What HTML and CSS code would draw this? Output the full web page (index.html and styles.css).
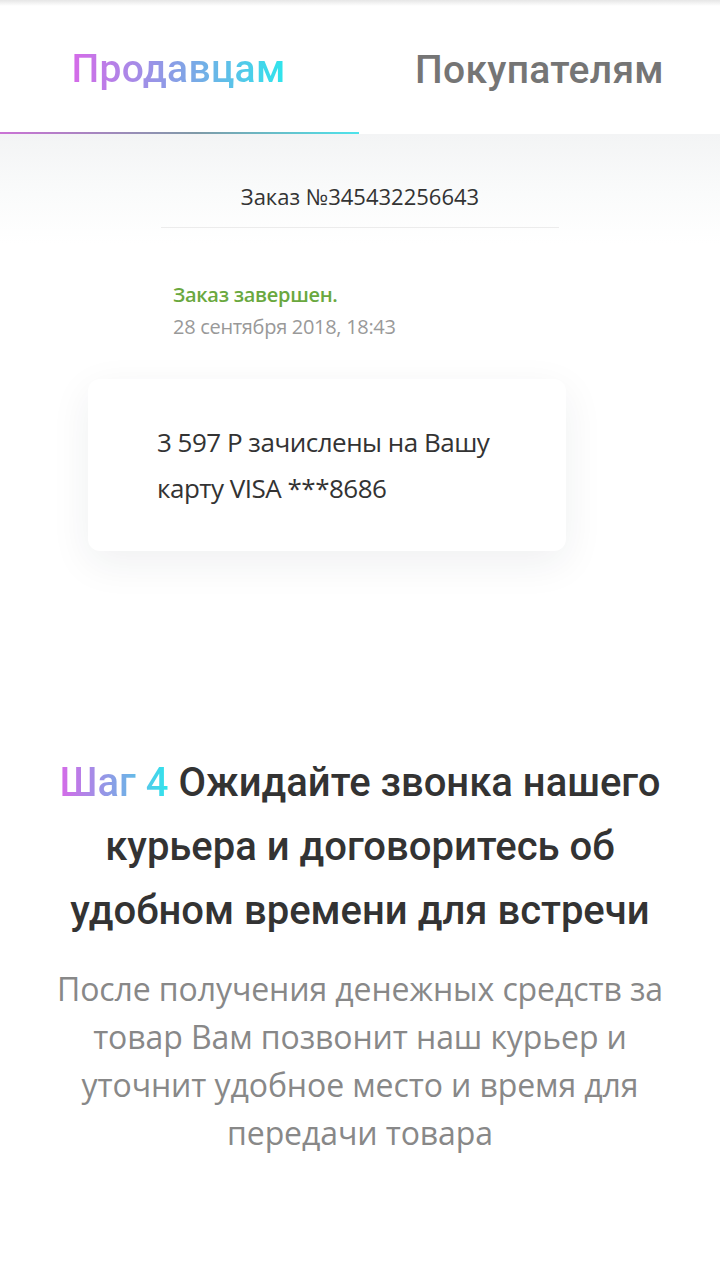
FILE: index.html
```html
<!DOCTYPE html>
<html lang="ru">
<head>
<meta charset="utf-8">
<link rel="stylesheet" href="styles.css">
</head>
<body>
<div class="page">
  <nav class="tabs">
    <div class="tab tab-active"><span class="grad">Продавцам</span></div>
    <div class="tab">Покупателям</div>
  </nav>
  <section class="order">
    <div class="order-title">Заказ №345432256643</div>
    <div class="order-status">
      <div class="status-ok">Заказ завершен.</div>
      <div class="status-date">28 сентября 2018, 18:43</div>
    </div>
    <div class="card">
      <p>3 597 Р зачислены на Вашу карту VISA ***8686</p>
    </div>
  </section>
  <section class="step">
    <h2 class="step-title"><span class="grad">Шаг 4</span> Ожидайте звонка нашего курьера и договоритесь об удобном времени для встречи</h2>
    <p class="step-text">После получения денежных средств за товар Вам позвонит наш курьер и уточнит удобное место и время для передачи товара</p>
  </section>
</div>
</body>
</html>
```

FILE: styles.css
```css
* { box-sizing: border-box; }
html, body { margin: 0; padding: 0; background: #fff; }
.page {
  width: 720px;
  min-height: 1274px;
  background: linear-gradient(#e6e6e6, #fff 6px);
  font-family: "Open Sans", sans-serif;
}
.tabs {
  display: flex;
  height: 134px;
  padding-top: 12px;
}
.tab {
  flex: 1;
  display: flex;
  align-items: center;
  justify-content: center;
  font-family: Roboto, sans-serif;
  font-weight: 500;
  font-size: 39px;
  letter-spacing: 0.3px;
  color: #757575;
  padding-bottom: 6px;
}
.tab-active {
  border-bottom: 2px solid transparent;
  border-image: linear-gradient(90deg, #cc72d6, #7f9aa8 55%, #4ee4ec) 1;
  margin-left: -2px;
}
.grad {
  background: linear-gradient(90deg, #d66ae8 0%, #7ea6e6 55%, #2ee6ec 100%);
  -webkit-background-clip: text;
  background-clip: text;
  color: transparent;
}
.order {
  background: linear-gradient(#f3f4f5, #fafbfb 60px, #fff 110px);
  padding-top: 47px;
  display: flex;
  flex-direction: column;
  align-items: center;
}
.order-title {
  font-size: 22px;
  color: #333;
  width: 398px;
  text-align: center;
  padding-bottom: 16px;
  border-bottom: 1px solid #ececec;
}
.order-status {
  align-self: flex-start;
  margin-left: 173px;
  margin-top: 52px;
}
.status-ok {
  color: #6aa83e;
  font-size: 20px;
  font-weight: 600;
  line-height: 30px;
  letter-spacing: -0.3px;
}
.status-date {
  color: #999;
  font-size: 20px;
  line-height: 34px;
  letter-spacing: -0.3px;
}
.card {
  align-self: flex-start;
  width: 478px;
  margin-top: 35px;
  margin-left: 88px;
  background: #fff;
  border-radius: 12px;
  box-shadow: 0 12px 40px rgba(30, 40, 60, 0.07);
  padding: 40px 40px 40px 69px;
}
.card p {
  margin: 0;
  font-size: 26px;
  line-height: 46px;
  color: #333;
  letter-spacing: -0.5px;
}
.step {
  padding: 200px 30px 0;
  text-align: center;
}
.step-title {
  margin: 0;
  font-family: Roboto, sans-serif;
  font-weight: 500;
  font-size: 40px;
  line-height: 64px;
  color: #333;
}
.step-text {
  margin: 22px 20px 0;
  font-size: 32px;
  line-height: 48px;
  color: #888;
  font-weight: 400;
  letter-spacing: -0.1px;
}
```
